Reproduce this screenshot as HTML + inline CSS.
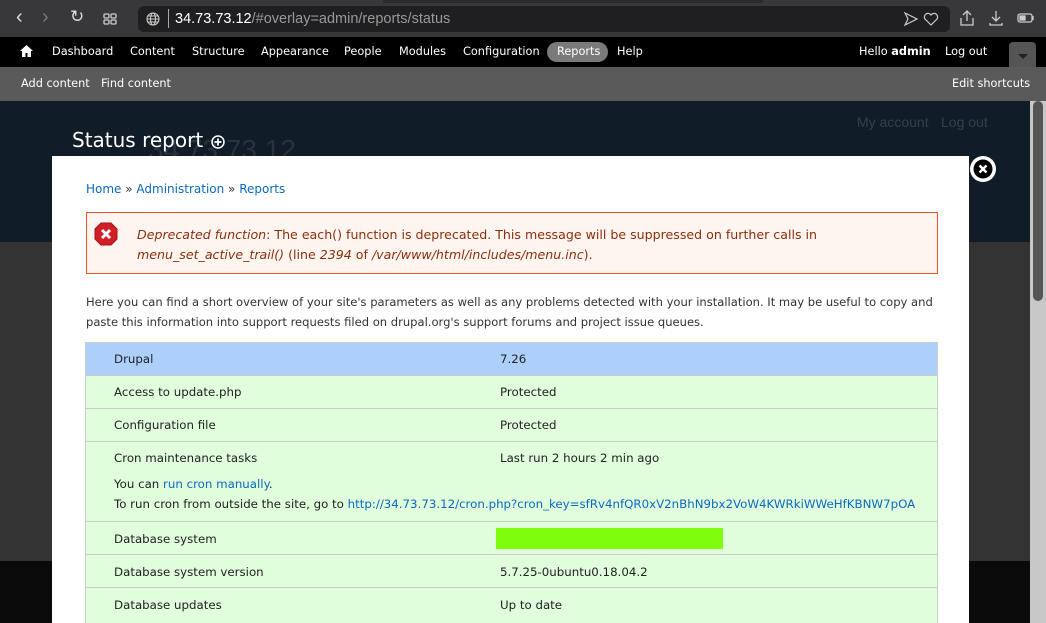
<!DOCTYPE html>
<html><head><style>
*{margin:0;padding:0;box-sizing:border-box}
body{width:1046px;height:623px;overflow:hidden;background:#333;font-family:"DejaVu Sans","Liberation Sans",sans-serif;font-size:11.8px;color:#333;position:relative}
.a{position:absolute;white-space:nowrap}
.t{font-size:11.3px;color:#fff}
a{color:#0b6bbd;text-decoration:none}
</style></head><body>
<!-- browser chrome -->
<div class="a" style="left:0;top:0;width:1046px;height:37px;background:#38383a"></div>
<div class="a" style="left:383px;top:0;width:380px;height:3px;background:#2a2a2c"></div>
<div class="a" style="left:138px;top:6px;width:812px;height:26px;background:#1f1f21;border-radius:6px"></div>
<div class="a" style="left:16px;top:6px;color:#ddd;font-size:20px;font-family:'Liberation Sans'">&#8249;</div>
<div class="a" style="left:42px;top:6px;color:#777;font-size:20px;font-family:'Liberation Sans'">&#8250;</div>
<div class="a" style="left:70px;top:7px;color:#ddd;font-size:17px">&#8635;</div>
<svg class="a" style="left:103px;top:13px" width="14" height="12"><g fill="none" stroke="#ccc" stroke-width="1.3"><rect x="1" y="1" width="5" height="4" rx="1"/><rect x="8" y="1" width="5" height="4" rx="1"/><rect x="1" y="7" width="5" height="4" rx="1"/><rect x="8" y="7" width="5" height="4" rx="1"/></g></svg>
<svg class="a" style="left:146px;top:12px" width="14" height="14"><g fill="none" stroke="#ccc" stroke-width="1.1"><circle cx="7" cy="7" r="6"/><ellipse cx="7" cy="7" rx="2.5" ry="6"/><path d="M1 7h12M2 4h10M2 10h10"/></g></svg>
<div class="a" style="left:168px;top:9px;width:1px;height:19px;background:#aaa"></div>
<div class="a" style="left:175px;top:11px;font-family:'Liberation Sans';font-size:14.5px;color:#999"><span style="color:#fff">34.73.73.12</span>/#overlay=admin/reports/status</div>
<svg class="a" style="left:903px;top:11px" width="40" height="16"><g fill="none" stroke="#ccc" stroke-width="1.2"><path d="M2 2l12 6-12 6 3-6z"/><path d="M28 14l-6-6a3.3 3.3 0 0 1 6-4 3.3 3.3 0 0 1 6 4z"/></g></svg>
<svg class="a" style="left:958px;top:9px" width="80" height="18"><g fill="none" stroke="#ccc" stroke-width="1.3"><path d="M9 12V2M5 6l4-4 4 4M3 9v7h12V9"/><path d="M38 2v10M34 8l4 4 4-4M32 14v2h12v-2"/><rect x="60" y="5" width="14" height="8" rx="2"/><rect x="62" y="7" width="5" height="4" fill="#ccc"/><path d="M75 7v4"/></g></svg>
<!-- toolbar -->
<div class="a" style="left:0;top:37px;width:1046px;height:30px;background:#000"></div>
<svg class="a" style="left:20px;top:45px" width="13" height="12"><path d="M6.5 0L0 6h2v6h3.5V8h2v4H11V6h2z" fill="#fff"/></svg>
<div class="a t" style="top:45px;left:52px">Dashboard</div>
<div class="a t" style="top:45px;left:130px">Content</div>
<div class="a t" style="top:45px;left:192px">Structure</div>
<div class="a t" style="top:45px;left:261px">Appearance</div>
<div class="a t" style="top:45px;left:344px">People</div>
<div class="a t" style="top:45px;left:399px">Modules</div>
<div class="a t" style="top:45px;left:463px">Configuration</div>
<div class="a" style="top:42px;left:547px;width:61px;height:20px;border-radius:10px;background:#7a7a7a"></div>
<div class="a t" style="top:45px;left:557px">Reports</div>
<div class="a t" style="top:45px;left:617px">Help</div>
<div class="a t" style="top:45px;left:859px">Hello <b>admin</b></div>
<div class="a t" style="top:45px;left:945px">Log out</div>
<div class="a" style="top:42px;left:1009px;width:27px;height:27px;background:#555;border-radius:4px 4px 0 0"></div>
<div class="a" style="top:54px;left:1018px;width:0;height:0;border-left:5px solid transparent;border-right:5px solid transparent;border-top:5px solid #222"></div>
<div class="a" style="left:0;top:67px;width:1046px;height:34px;background:#5a5a5a"></div>
<div class="a t" style="top:77px;left:21px">Add content</div>
<div class="a t" style="top:77px;left:101px">Find content</div>
<div class="a t" style="top:77px;left:952px">Edit shortcuts</div>
<!-- page bg -->
<div class="a" style="left:0;top:101px;width:1030px;height:141px;background:#101c28"></div>
<div class="a" style="left:0;top:561px;width:1030px;height:62px;background:#0b0b0b"></div>
<div class="a" style="left:1030px;top:101px;width:16px;height:522px;background:#c8c8c8"></div>
<div class="a" style="left:1033px;top:101px;width:10px;height:200px;background:#555;border-radius:5px"></div>
<div class="a" style="left:857px;top:114px;font-family:'Liberation Sans';font-size:14px;color:#3a3f45">My account</div>
<div class="a" style="left:941px;top:114px;font-family:'Liberation Sans';font-size:14px;color:#3a3f45">Log out</div>
<div class="a" style="left:148px;top:134px;font-family:'Liberation Sans';font-size:28px;color:#2a333d">34.73.73.12</div>
<div class="a" style="left:72px;top:128px;font-size:20px;color:#fff">Status report</div>
<svg class="a" style="left:211px;top:135px" width="14" height="14"><circle cx="7" cy="7" r="6" fill="none" stroke="#fff" stroke-width="1.5"/><path d="M7 3.5v7M3.5 7h7" stroke="#fff" stroke-width="1.8"/></svg>
<!-- overlay -->
<div class="a" style="left:52px;top:156px;width:917px;height:467px;background:#fff"></div>
<div class="a" style="left:970px;top:156px;width:26px;height:26px;border-radius:13px;background:#fff"></div>
<svg class="a" style="left:973px;top:159px" width="20" height="20"><circle cx="10" cy="10" r="9.5" fill="#000"/><path d="M6.5 6.5l7 7M13.5 6.5l-7 7" stroke="#fff" stroke-width="2.4"/></svg>
<div class="a" style="left:86px;top:182px;font-size:12px"><a>Home</a> » <a>Administration</a> » <a>Reports</a></div>
<div class="a" style="left:86px;top:212px;width:852px;height:62px;background:#fef5f1;border:1px solid #ed541d"></div>
<svg class="a" style="left:94px;top:222px" width="24" height="24"><path d="M7 1h10l6 6v10l-6 6H7l-6-6V7z" fill="#d21f27" stroke="#a0141a"/><path d="M8 8l8 8M16 8l-8 8" stroke="#fff" stroke-width="3"/></svg>
<div class="a" style="left:137px;top:225px;color:#8c2e0b;font-size:12.6px;line-height:20px"><i>Deprecated function</i>: The each() function is deprecated. This message will be suppressed on further calls in<br><i>menu_set_active_trail()</i> (line <i>2394</i> of <i>/var/www/html/includes/menu.inc</i>).</div>
<div class="a" style="left:86px;top:292px;line-height:20px;font-size:11.55px">Here you can find a short overview of your site's parameters as well as any problems detected with your installation. It may be useful to copy and<br>paste this information into support requests filed on drupal.org's support forums and project issue queues.</div>
<div class="a" style="left:85px;top:342px;width:853px;height:281px;background:#ccc"></div>
<div class="a" style="left:86px;top:343px;width:851px;height:32px;background:#acd0fb"></div>
<div class="a" style="left:86px;top:376px;width:851px;height:32px;background:#e0fddc"></div>
<div class="a" style="left:86px;top:409px;width:851px;height:32px;background:#e0fddc"></div>
<div class="a" style="left:86px;top:442px;width:851px;height:79px;background:#e0fddc"></div>
<div class="a" style="left:86px;top:522px;width:851px;height:32px;background:#e0fddc"></div>
<div class="a" style="left:86px;top:555px;width:851px;height:32px;background:#e0fddc"></div>
<div class="a" style="left:86px;top:588px;width:851px;height:35px;background:#e0fddc"></div>
<div class="a" style="left:114px;top:352px;color:#222">Drupal</div><div class="a" style="left:500px;top:352px;color:#222">7.26</div>
<div class="a" style="left:114px;top:385px;color:#222">Access to update.php</div><div class="a" style="left:500px;top:385px;color:#222">Protected</div>
<div class="a" style="left:114px;top:418px;color:#222">Configuration file</div><div class="a" style="left:500px;top:418px;color:#222">Protected</div>
<div class="a" style="left:114px;top:451px;color:#222">Cron maintenance tasks</div><div class="a" style="left:500px;top:451px;color:#222">Last run 2 hours 2 min ago</div>
<div class="a" style="left:114px;top:477px;color:#222">You can <a>run cron manually</a>.</div>
<div class="a" style="left:114px;top:497px;color:#222">To run cron from outside the site, go to <a>http://34.73.73.12/cron.php?cron_key=sfRv4nfQR0xV2nBhN9bx2VoW4KWRkiWWeHfKBNW7pOA</a></div>
<div class="a" style="left:114px;top:532px;color:#222">Database system</div>
<div class="a" style="left:496px;top:528px;width:227px;height:21px;background:#80fd0d"></div>
<div class="a" style="left:114px;top:565px;color:#222">Database system version</div><div class="a" style="left:500px;top:565px;color:#222">5.7.25-0ubuntu0.18.04.2</div>
<div class="a" style="left:114px;top:598px;color:#222">Database updates</div><div class="a" style="left:500px;top:598px;color:#222">Up to date</div>
</body></html>
